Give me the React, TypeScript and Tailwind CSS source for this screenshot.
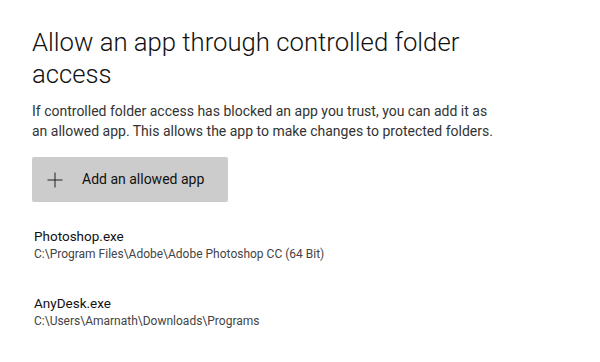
import React from "react";

export default function App() {
  const font = { fontFamily: 'Roboto, "Noto Sans", sans-serif' };
  return (
    <div className="w-[600px] h-[362px] bg-white text-black overflow-hidden" style={font}>
      <div className="pl-[32px] pt-[26px]">
        <h1 className="text-[25.7px] leading-[32px] font-light text-[#111] w-[480px]">
          Allow an app through controlled folder access
        </h1>
        <p className="mt-[11px] text-[14px] leading-[20px] text-[#333] w-[462px]">
          If controlled folder access has blocked an app you trust, you can add it as an allowed app. This allows the app to make changes to protected folders.
        </p>
        <button className="mt-[16px] w-[196px] h-[45px] bg-[#cccccc] rounded-[2px] flex items-center text-[14px] text-[#111]">
          <svg width="16" height="16" viewBox="0 0 16 16" className="ml-[15px]">
            <path d="M8 0.5V15.5M0.5 8H15.5" stroke="#222" strokeWidth="1" fill="none" />
          </svg>
          <span className="ml-[19px]">Add an allowed app</span>
        </button>
        <div className="ml-[2px] mt-[25px] flex flex-col gap-[32px]">
          <div>
            <div className="text-[13.5px] leading-[19px] text-[#111]">Photoshop.exe</div>
            <div className="text-[12px] leading-[16px] text-[#444]">C:\Program Files\Adobe\Adobe Photoshop CC (64 Bit)</div>
          </div>
          <div>
            <div className="text-[13.5px] leading-[19px] text-[#111]">AnyDesk.exe</div>
            <div className="text-[12px] leading-[16px] text-[#444]">C:\Users\Amarnath\Downloads\Programs</div>
          </div>
        </div>
      </div>
    </div>
  );
}
